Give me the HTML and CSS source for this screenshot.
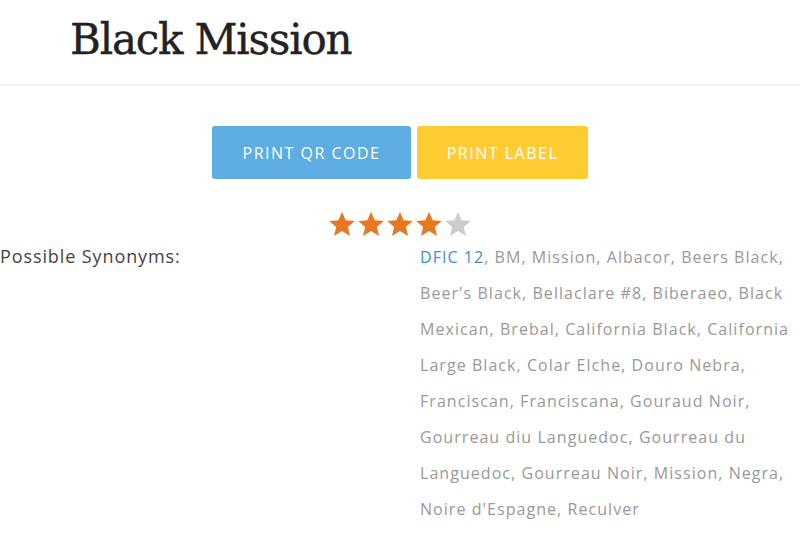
FILE: index.html
```html
<!DOCTYPE html>
<html>
<head>
<meta charset="utf-8">
<link rel="stylesheet" href="styles.css">
</head>
<body>
<header class="header">
  <h1 class="title">Black Mission</h1>
</header>
<main class="content">
  <div class="actions">
    <button class="btn btn-blue">PRINT QR CODE</button>
    <button class="btn btn-yellow">PRINT LABEL</button>
  </div>
  <div class="rating">
    <svg class="star" viewBox="0 0 24 24"><path class="on" d="M12 1.5l3.1 7.3 7.9.6-6 5.2 1.9 7.7L12 18.1l-6.9 4.2 1.9-7.7-6-5.2 7.9-.6z"/></svg>
    <svg class="star" viewBox="0 0 24 24"><path class="on" d="M12 1.5l3.1 7.3 7.9.6-6 5.2 1.9 7.7L12 18.1l-6.9 4.2 1.9-7.7-6-5.2 7.9-.6z"/></svg>
    <svg class="star" viewBox="0 0 24 24"><path class="on" d="M12 1.5l3.1 7.3 7.9.6-6 5.2 1.9 7.7L12 18.1l-6.9 4.2 1.9-7.7-6-5.2 7.9-.6z"/></svg>
    <svg class="star" viewBox="0 0 24 24"><path class="on" d="M12 1.5l3.1 7.3 7.9.6-6 5.2 1.9 7.7L12 18.1l-6.9 4.2 1.9-7.7-6-5.2 7.9-.6z"/></svg>
    <svg class="star" viewBox="0 0 24 24"><path class="off" d="M12 1.5l3.1 7.3 7.9.6-6 5.2 1.9 7.7L12 18.1l-6.9 4.2 1.9-7.7-6-5.2 7.9-.6z"/></svg>
  </div>
  <div class="synonyms">
    <div class="label">Possible Synonyms:</div>
    <div class="value"><a class="link" href="#">DFIC 12</a>, BM, Mission, Albacor, Beers Black, Beer's Black, Bellaclare #8, Biberaeo, Black Mexican, Brebal, California Black, California Large Black, Colar Elche, Douro Nebra, Franciscan, Franciscana, Gouraud Noir, Gourreau diu Languedoc, Gourreau du Languedoc, Gourreau Noir, Mission, Negra, Noire d'Espagne, Reculver</div>
  </div>
</main>
</body>
</html>
```
FILE: styles.css
```css
html, body {
  margin: 0;
  padding: 0;
  background: #fff;
}
body {
  font-family: "Open Sans", "DejaVu Sans", sans-serif;
  width: 800px;
  overflow: hidden;
}
.header {
  height: 86px;
  border-bottom: 2px solid #f3f3f3;
  box-sizing: border-box;
  padding-left: 70px;
  display: flex;
  align-items: center;
}
.title {
  margin: 0;
  font-family: "DejaVu Serif", "Liberation Serif", serif;
  font-weight: normal;
  font-size: 42px;
  color: #222;
  letter-spacing: -1.2px;
  line-height: 1;
  padding-bottom: 5px;
  -webkit-text-stroke: 0.4px #222;
}
.content {
  padding-top: 40px;
}
.actions {
  display: flex;
  justify-content: center;
  gap: 6px;
}
.btn {
  border: none;
  border-radius: 3px;
  height: 53px;
  color: #fff;
  font-family: "Open Sans", "DejaVu Sans", sans-serif;
  font-size: 16px;
  letter-spacing: 1.5px;
  padding: 0;
}
.btn-blue {
  background: #5dade2;
  width: 199px;
}
.btn-yellow {
  background: #ffcd33;
  width: 171px;
}
.rating {
  display: flex;
  justify-content: center;
  align-items: center;
  margin-top: 31px;
  height: 28px;
  gap: 1px;
}
.star {
  width: 28px;
  height: 28px;
  display: block;
}
.on { fill: #e87722; }
.off { fill: #cccccc; }
.synonyms {
  display: grid;
  grid-template-columns: 420px 1fr;
  align-items: baseline;
  line-height: 36px;
}
.label {
  color: #444;
  font-size: 18px;
  letter-spacing: 0.9px;
}
.value {
  color: #999;
  font-size: 16px;
  letter-spacing: 1.05px;
  padding-right: 8px;
}
.link {
  color: #3a8fd6;
  text-decoration: none;
}
```
